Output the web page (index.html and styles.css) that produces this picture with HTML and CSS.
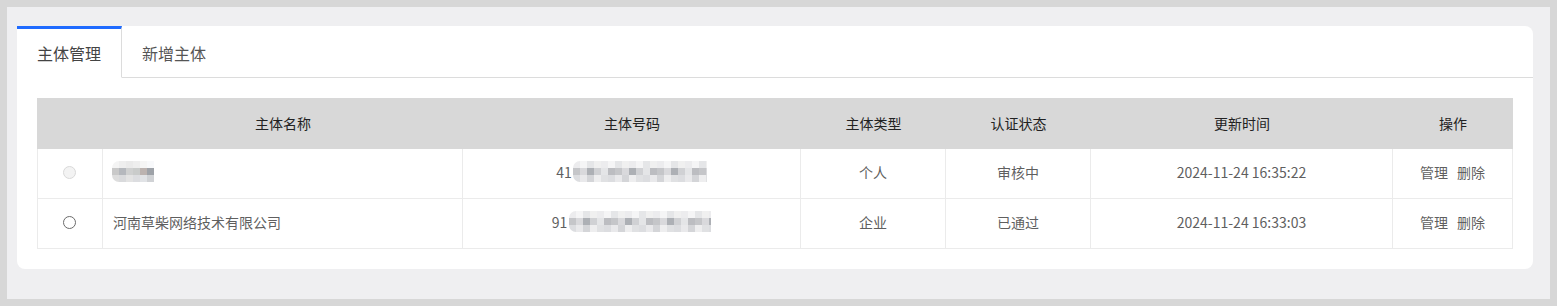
FILE: index.html
```html
<!DOCTYPE html>
<html lang="zh-CN">
<head>
<meta charset="utf-8">
<title>主体管理</title>
<link rel="stylesheet" href="styles.css">
</head>
<body>
<div class="frame">
  <div class="card">
    <div class="tabs">
      <div class="tab active">主体管理</div>
      <div class="tab">新增主体</div>
      <div class="tab-fill"></div>
    </div>
    <div class="card-body">
      <div class="table">
        <div class="thead">
          <div class="th"></div>
          <div class="th">主体名称</div>
          <div class="th">主体号码</div>
          <div class="th">主体类型</div>
          <div class="th">认证状态</div>
          <div class="th">更新时间</div>
          <div class="th">操作</div>
        </div>
        <div class="trow">
          <div class="td"><span class="radio disabled"></span></div>
          <div class="td left"><span class="mosaic mosaic-name"></span></div>
          <div class="td"><span class="num">41</span><span class="mosaic mosaic-id1"></span></div>
          <div class="td">个人</div>
          <div class="td">审核中</div>
          <div class="td">2024-11-24 16:35:22</div>
          <div class="td actions"><a class="link">管理</a><a class="link">删除</a></div>
        </div>
        <div class="trow">
          <div class="td"><span class="radio"></span></div>
          <div class="td left">河南草柴网络技术有限公司</div>
          <div class="td"><span class="num">91</span><span class="mosaic mosaic-id2"></span></div>
          <div class="td">企业</div>
          <div class="td">已通过</div>
          <div class="td">2024-11-24 16:33:03</div>
          <div class="td actions"><a class="link">管理</a><a class="link">删除</a></div>
        </div>
      </div>
    </div>
  </div>
</div>
</body>
</html>
```

FILE: styles.css
```css
html, body {
  margin: 0;
  padding: 0;
}
body {
  background: #d7d7d7;
  font-family: "Microsoft YaHei", "Noto Sans CJK SC", "Noto Sans", sans-serif;
  font-size: 14px;
  color: #5f5f5f;
}
.frame {
  margin: 7px;
  height: 292px;
  box-sizing: border-box;
  padding: 19px 17px 0 10px;
  background: #efeff1;
}
.card {
  height: 243px;
  box-sizing: border-box;
  background: #fff;
  border-radius: 8px;
}
.tabs {
  display: flex;
}
.tab {
  height: 52px;
  box-sizing: border-box;
  padding: 1px 20px 0;
  line-height: 47px;
  font-size: 16px;
  color: #555;
  border-top: 3px solid transparent;
  border-bottom: 1px solid #dcdcdc;
  background: #fff;
}
.tab.active {
  color: #444;
  border-top-color: #1f6bff;
  border-right: 1px solid #dcdcdc;
  border-bottom-color: transparent;
}
.tab-fill {
  flex: 1;
  border-bottom: 1px solid #dcdcdc;
  border-top-right-radius: 8px;
}
.card-body {
  padding: 20px;
}
.thead,
.trow {
  display: grid;
}
.thead {
  grid-template-columns: 66px 360px 338px 145px 145px 302px 120px;
  height: 51px;
  background: #d8d8d8;
}
.th {
  display: flex;
  align-items: center;
  justify-content: center;
  color: #222;
  padding-bottom: 1px;
}
.trow {
  grid-template-columns: 65px 360px 338px 145px 145px 302px 120px;
  border-left: 1px solid #ebebeb;
}
.td {
  height: 50px;
  box-sizing: border-box;
  padding-bottom: 3px;
  border-right: 1px solid #ebebeb;
  border-bottom: 1px solid #ebebeb;
  display: flex;
  align-items: center;
  justify-content: center;
  white-space: nowrap;
}
.td.left {
  justify-content: flex-start;
  padding-left: 10px;
}
.radio {
  display: block;
  width: 13px;
  height: 13px;
  box-sizing: border-box;
  border-radius: 50%;
  border: 1px solid #6b6b6b;
  background: #fff;
  margin-top: 0;
  margin-left: -1px;
}
.radio.disabled {
  border-color: #d9d9d9;
  background: #f3f3f3;
}
.num {
  display: inline-block;
}
.mosaic {
  display: inline-block;
  height: 21px;
  margin-top: -1px;
  border-radius: 7px 0 0 7px;
  filter: blur(0.3px);
  background:
    repeating-linear-gradient(90deg, #ececee 0 7px, #f5f5f6 7px 14px, #e5e6e8 14px 21px, #f0f0f0 21px 28px) 0 0 / 100% 7px no-repeat,
    repeating-linear-gradient(90deg, #c5c6c9 0 7px, #d9d9dc 7px 14px, #adb0b5 14px 21px, #d0d1d4 21px 28px, #e4e5e7 28px 35px, #bcbdc1 35px 42px) 0 7px / 100% 7px no-repeat,
    repeating-linear-gradient(90deg, #dcdde0 0 7px, #e9e9eb 7px 14px, #d4d5d8 14px 21px, #eeeeef 21px 28px, #e0e1e3 28px 35px) 0 14px / 100% 7px no-repeat;
}
.mosaic-name {
  width: 42px;
  margin-left: -1px;
  background:
    linear-gradient(90deg, #f4f4f4 0 7px, #eeeeee 7px 14px, #eaeaea 14px 21px, #eeeeee 21px 28px, #f5f5f5 28px 35px, #f8f9fb 35px 42px) 0 0 / 100% 7px no-repeat,
    linear-gradient(90deg, #c9c9c9 0 7px, #b5b8bd 7px 14px, #cfd0d0 14px 21px, #c9cbca 21px 28px, #bcb3b0 28px 35px, #9ea2a8 35px 42px) 0 7px / 100% 7px no-repeat,
    linear-gradient(90deg, #dddddd 0 7px, #d9dadc 7px 14px, #e3e3e3 14px 21px, #dcdde0 21px 28px, #e1e3e6 28px 35px, #d0d2d5 35px 42px) 0 14px / 100% 7px no-repeat;
}
.mosaic-id1 {
  width: 134px;
  margin-left: 1px;
}
.mosaic-id2 {
  width: 142px;
  margin-left: 2px;
}
.actions {
  gap: 9px;
}
.link {
  color: #5f5f5f;
  cursor: pointer;
  text-decoration: none;
}
```
